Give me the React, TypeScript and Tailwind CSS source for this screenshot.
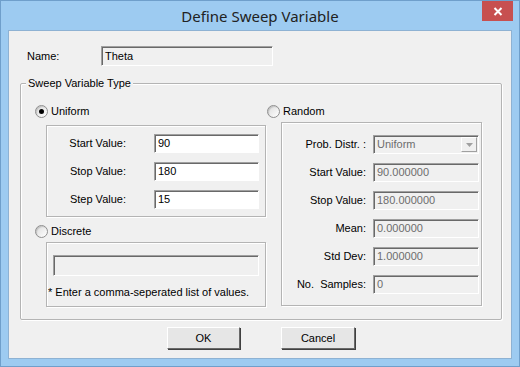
import React from 'react';

const font = { fontFamily: '"Liberation Sans", Arial, sans-serif' };

const Radio = ({ checked, label }: { checked?: boolean; label: string }) => (
  <div className="flex items-center h-4">
    <span className="w-[13px] h-[13px] rounded-full border border-[#8f8f8f] bg-gradient-to-br from-[#dcdcdc] to-white flex items-center justify-center shadow-[inset_1px_1px_1px_rgba(0,0,0,0.15)]">
      {checked && <span className="w-[5px] h-[5px] rounded-full bg-black" />}
    </span>
    <span className="ml-[3px] text-[11px] text-black">{label}</span>
  </div>
);

const Field = ({
  value,
  disabled,
  className = '',
}: {
  value: string;
  disabled?: boolean;
  className?: string;
}) => (
  <div
    className={`border border-t-[#a0a0a0] border-l-[#a0a0a0] border-b-white border-r-white shadow-[inset_1px_1px_0_#696969] flex items-center pl-[3px] text-[11px] ${
      disabled ? 'bg-[#f0f0f0] text-[#6d6d6d]' : 'bg-white text-black'
    } ${className}`}
  >
    {value}
  </div>
);

const Button = ({ label, className = '' }: { label: string; className?: string }) => (
  <button
    className={`h-[22px] border border-t-white border-l-white border-b-[#696969] border-r-[#696969] bg-[#e6e6e6] shadow-[1px_1px_0_#404040] text-[11px] text-black ${className}`}
  >
    {label}
  </button>
);

export default function App() {
  const randomRows = [
    ['Start Value:', '90.000000'],
    ['Stop Value:', '180.000000'],
    ['Mean:', '0.000000'],
    ['Std Dev:', '1.000000'],
    ['No.  Samples:', '0'],
  ];

  return (
    <div style={font} className="w-[520px] h-[367px] bg-[#9dcbf1] border border-[#6f9fcb] flex flex-col">
      {/* title bar */}
      <div className="relative h-[29px] flex items-center justify-center">
        <span style={{ fontFamily: '"Noto Sans", sans-serif' }} className="text-[15px] text-[#222] mt-[1px]">
          Define Sweep Variable
        </span>
        <div className="absolute right-[6px] top-0 w-[31px] h-[20px] bg-[#c75050] flex items-center justify-center">
          <svg width="10" height="9" viewBox="0 0 10 9">
            <path d="M1.5 1 L8.5 8 M8.5 1 L1.5 8" stroke="white" strokeWidth="2" />
          </svg>
        </div>
      </div>

      {/* client area */}
      <div className="mx-[7px] mb-[7px] flex-1 bg-[#f0f0f0] border border-[#8eb2d3] flex flex-col text-[11px]">
        {/* name row */}
        <div className="flex items-center mt-[15px]">
          <span className="ml-[18px] w-[74px]">Name:</span>
          <Field value="Theta" disabled className="w-[172px] h-[20px] !text-black" />
        </div>

        {/* group box */}
        <div className="relative mt-[17px] ml-[11px] w-[482px] h-[237px] border border-[#b4b4b4] shadow-[inset_1px_1px_0_white,1px_1px_0_white] rounded-[2px] pt-[19px] pl-[14px] flex">
          <span className="absolute left-[5px] -top-[8px] px-[2px] bg-[#f0f0f0] leading-[14px]">
            Sweep Variable Type
          </span>

          {/* left column */}
          <div className="w-[232px] flex flex-col">
            <Radio checked label="Uniform" />
            <div className="mt-[6px] ml-[11px] w-[220px] h-[92px] border border-[#b4b4b4] shadow-[inset_1px_1px_0_white,1px_1px_0_white] pt-[8px] flex flex-col gap-[9px]">
              {[
                ['Start Value:', '90'],
                ['Stop Value:', '180'],
                ['Step Value:', '15'],
              ].map(([l, v]) => (
                <div key={l} className="flex items-center">
                  <span className="w-[79px] text-right">{l}</span>
                  <Field value={v} className="ml-[28px] w-[105px] h-[19px]" />
                </div>
              ))}
            </div>

            <div className="mt-[6px]">
              <Radio label="Discrete" />
            </div>
            <div className="mt-[3px] ml-[11px] w-[220px] h-[65px] border border-[#b4b4b4] shadow-[inset_1px_1px_0_white,1px_1px_0_white] flex flex-col">
              <Field value="" disabled className="mt-[12px] ml-[6px] w-[206px] h-[21px]" />
              <span className="mt-[8px] ml-[1px]">* Enter a comma-seperated list of values.</span>
            </div>
          </div>

          {/* right column */}
          <div className="flex flex-col">
            <Radio label="Random" />
            <div className="mt-[3px] ml-[14px] w-[201px] h-[184px] border border-[#b4b4b4] shadow-[inset_1px_1px_0_white,1px_1px_0_white] pt-[12px] flex flex-col gap-[9px]">
              <div className="flex items-center">
                <span className="w-[84px] text-right">Prob. Distr. :</span>
                <div className="ml-[7px] w-[106px] h-[19px] border border-t-[#a0a0a0] border-l-[#a0a0a0] border-b-white border-r-white shadow-[inset_1px_1px_0_#696969] bg-[#f0f0f0] text-[#6d6d6d] flex items-center pl-[3px]">
                  <span className="flex-1">Uniform</span>
                  <div className="w-[16px] h-[15px] mr-[1px] border border-t-white border-l-white border-b-[#a0a0a0] border-r-[#a0a0a0] bg-[#f0f0f0] flex items-center justify-center">
                    <svg width="7" height="4" viewBox="0 0 7 4">
                      <path d="M0 0 H7 L3.5 4 Z" fill="#a0a0a0" />
                    </svg>
                  </div>
                </div>
              </div>
              {randomRows.map(([l, v]) => (
                <div key={l} className="flex items-center">
                  <span className="w-[84px] text-right whitespace-pre">{l}</span>
                  <Field value={v} disabled className="ml-[7px] w-[106px] h-[19px]" />
                </div>
              ))}
            </div>
          </div>
        </div>

        {/* buttons */}
        <div className="mt-[7px] flex justify-center gap-[41px] pl-[2px]">
          <Button label="OK" className="w-[73px]" />
          <Button label="Cancel" className="w-[74px]" />
        </div>
      </div>
    </div>
  );
}
